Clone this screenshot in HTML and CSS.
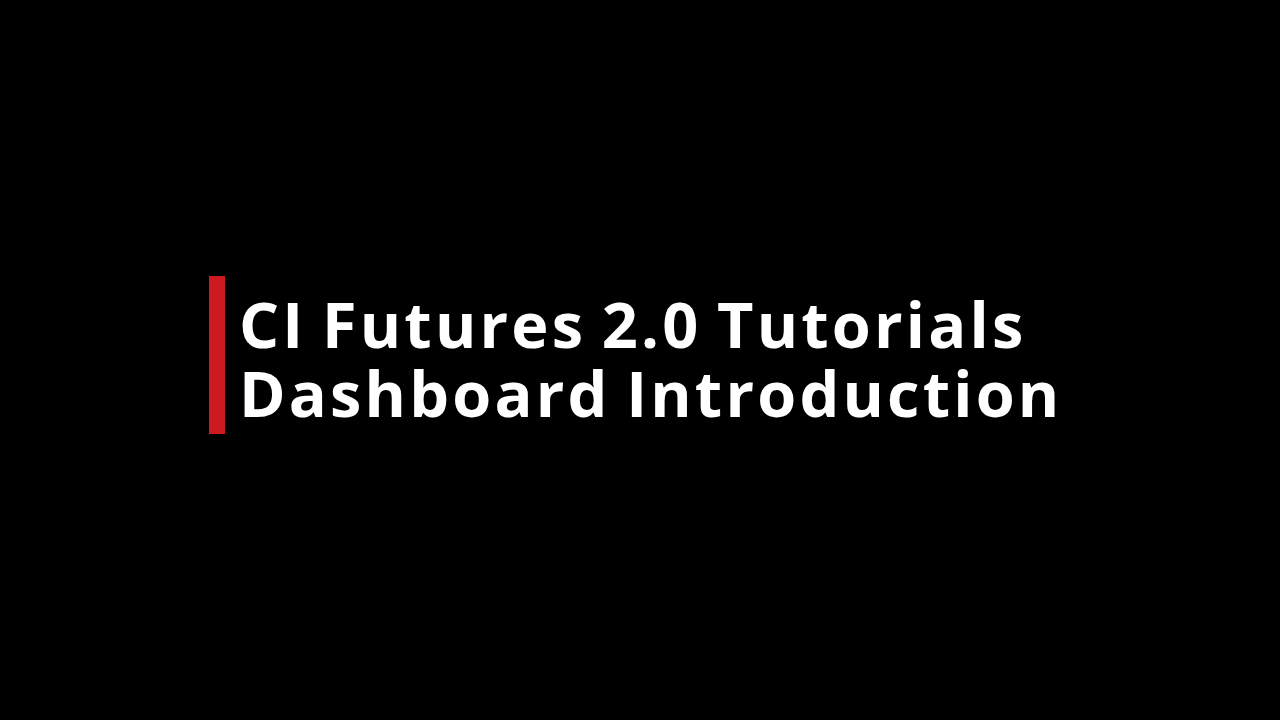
FILE: index.html
```html
<!DOCTYPE html>
<html lang="en">
<head>
    <meta charset="UTF-8">
    <meta name="viewport" content="width=device-width, initial-scale=1.0">
    <title>CI Futures 2.0 Tutorials</title>
    <link rel="stylesheet" href="styles.css">
</head>
<body>
    <div class="slide">
        <div class="title-block">
            <div class="accent-bar"></div>
            <h1 class="title">
                <span class="title-line">CI Futures 2.0 Tutorials</span>
                <span class="title-line">Dashboard Introduction</span>
            </h1>
        </div>
    </div>
</body>
</html>
```

FILE: styles.css
```css
html, body {
    margin: 0;
    height: 100%;
    background-color: #000000;
}

.slide {
    width: 1280px;
    height: 720px;
    padding: 276px 0 0 209px;
    box-sizing: border-box;
}

.title-block {
    display: flex;
    gap: 14px;
}

.accent-bar {
    width: 16px;
    height: 158px;
    background-color: #cc1a1f;
    flex-shrink: 0;
}

.title {
    margin: 13px 0 0 0;
    color: #ffffff;
    font-family: "Open Sans", Arial, sans-serif;
    font-weight: 700;
    font-size: 63px;
    line-height: 69px;
    letter-spacing: 3.2px;
    word-spacing: -4px;
}

.title-line {
    display: block;
    white-space: nowrap;
}
```
